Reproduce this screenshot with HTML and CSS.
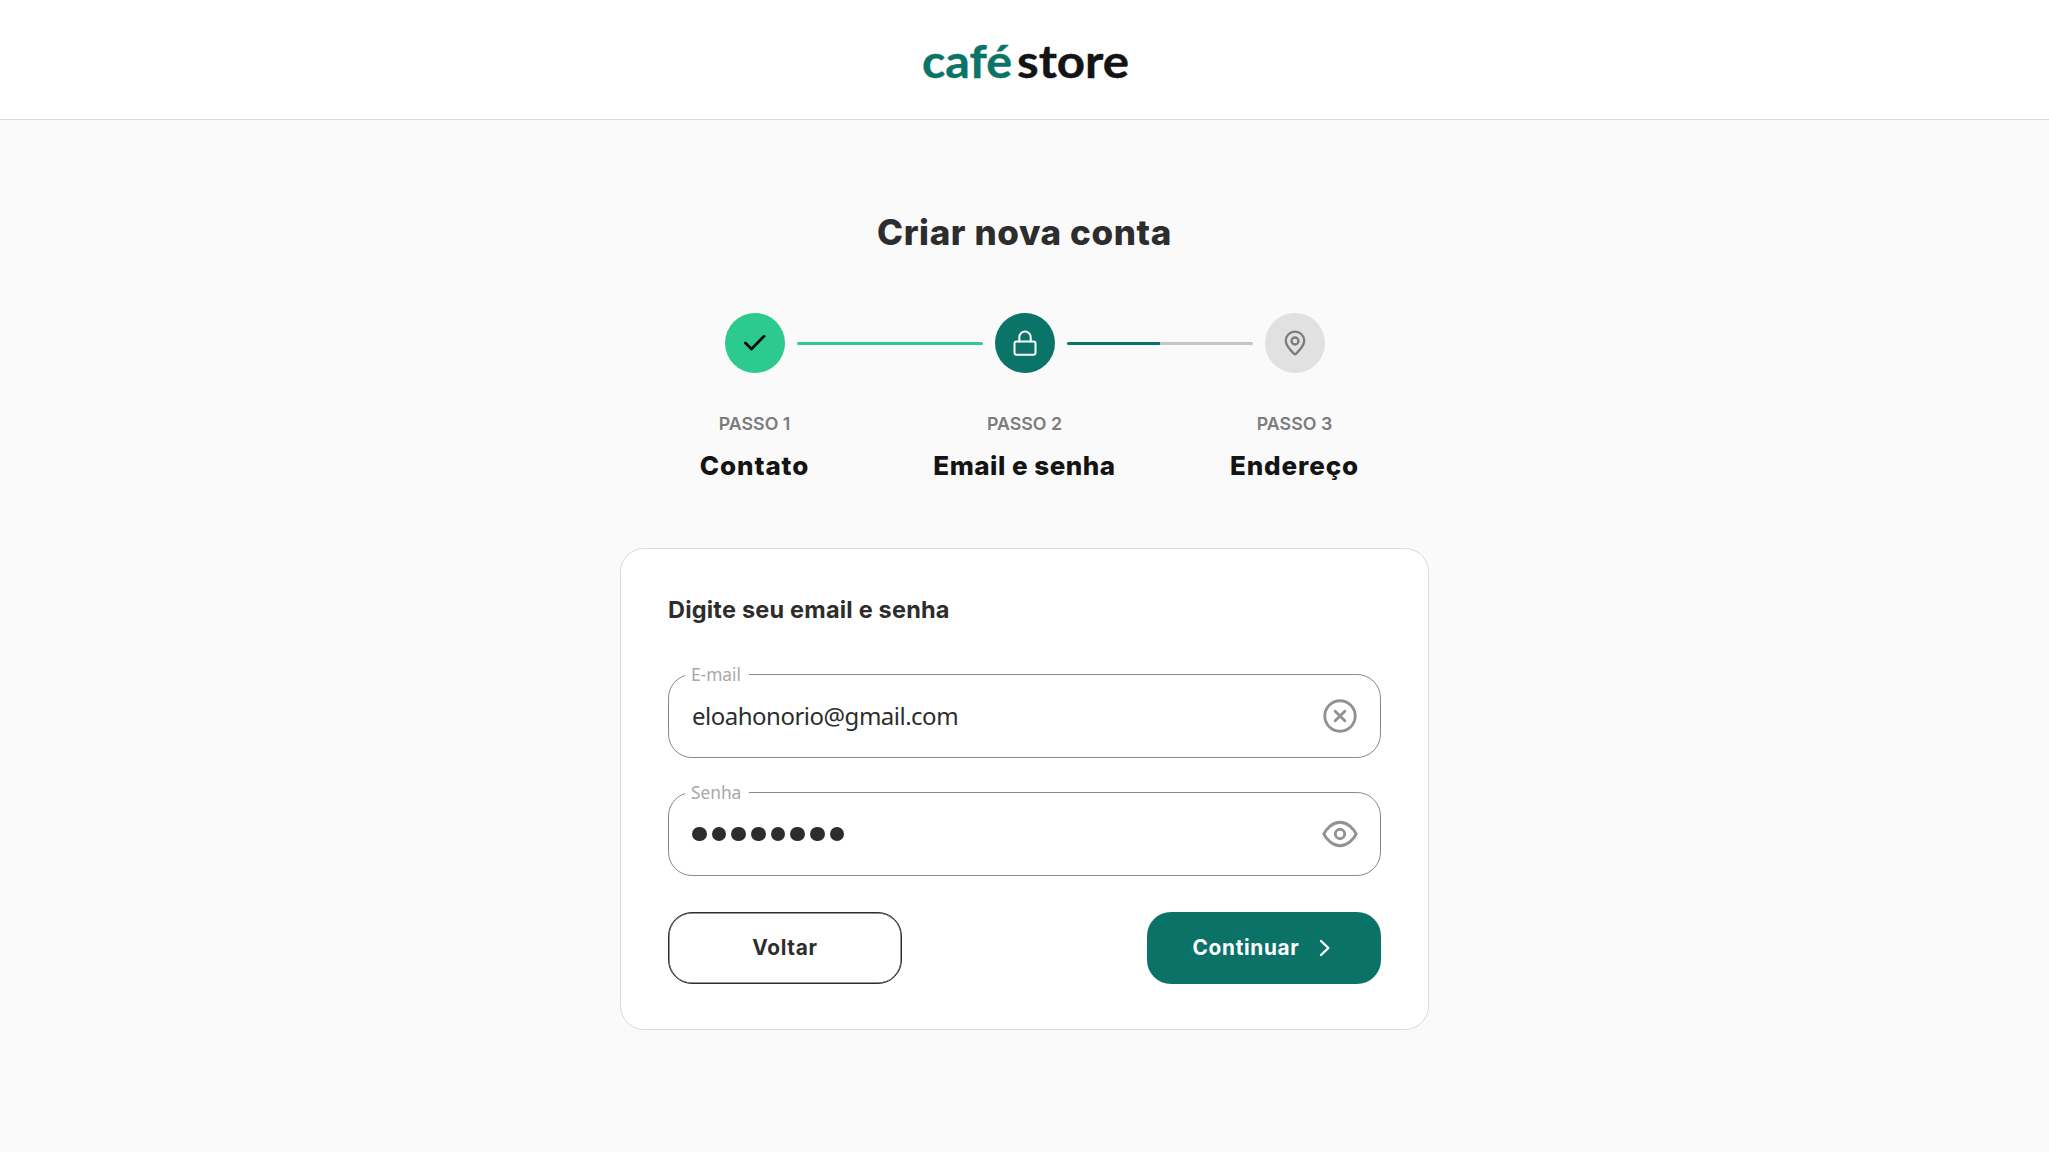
FILE: index.html
```html
<!DOCTYPE html>
<html lang="pt-BR">
<head>
<meta charset="utf-8">
<title>Criar nova conta – café store</title>
<link rel="stylesheet" href="styles.css">
</head>
<body>
<header class="header">
  <svg class="logo" width="208" height="60" viewBox="0 0 208 60" role="img" aria-label="café store">
    <text class="logo-cafe" x="1" y="49.500" textLength="90" lengthAdjust="spacingAndGlyphs">café</text>
    <text class="logo-store" x="96" y="49.500" textLength="112" lengthAdjust="spacingAndGlyphs">store</text>
  </svg>
</header>
<main class="page">
  <h1 class="title">Criar nova conta</h1>
  <ol class="steps">
    <li class="step">
      <span class="badge badge-done"><svg width="24" height="24" viewBox="0 0 24 24"><path d="M2.500 12 8.500 18 21 5.200" stroke-width="2.900"/></svg></span>
      <span class="step-number">PASSO 1</span>
      <span class="step-name step-name-wide">Contato</span>
    </li>
    <li class="connector connector-done"></li>
    <li class="step">
      <span class="badge badge-current"><svg width="24" height="26" viewBox="0 0 24 26"><rect x="1.500" y="11.500" width="21" height="13.200" rx="2"/><path d="M6.300 11.500V7.300a5.700 5.700 0 0 1 11.400 0v4.200"/></svg></span>
      <span class="step-number">PASSO 2</span>
      <span class="step-name">Email e senha</span>
    </li>
    <li class="connector connector-half"></li>
    <li class="step">
      <span class="badge badge-next"><svg width="22" height="26" viewBox="0 0 22 26"><path d="M20.200 10.800c0 5.200-5.300 10.200-8.300 13a1.300 1.300 0 0 1-1.800 0C7.100 21 1.800 16 1.800 10.800a9.200 9.200 0 0 1 18.400 0Z"/><circle cx="11" cy="11" r="3.500"/></svg></span>
      <span class="step-number">PASSO 3</span>
      <span class="step-name step-name-wide">Endereço</span>
    </li>
  </ol>
  <form class="card">
    <h2 class="card-title">Digite seu email e senha</h2>
    <div class="field">
      <label class="field-label">E-mail</label>
      <span class="field-value">eloahonorio@gmail.com</span>
      <svg class="field-icon" width="36" height="36" viewBox="0 0 36 36"><circle cx="18" cy="18" r="15.200"/><path d="m13.200 13.200 9.600 9.600m0-9.600-9.600 9.600"/></svg>
    </div>
    <div class="field field-password">
      <label class="field-label">Senha</label>
      <span class="dots"><i></i><i></i><i></i><i></i><i></i><i></i><i></i><i></i></span>
      <svg class="field-icon" width="36" height="36" viewBox="0 0 36 36"><path d="M1.800 18C4.500 12.600 10.500 6.200 18 6.200S31.500 12.600 34.200 18C31.500 23.400 25.500 29.800 18 29.800S4.500 23.400 1.800 18Z"/><circle cx="18" cy="18" r="4.700"/></svg>
    </div>
    <div class="actions">
      <button class="button button-back" type="button">Voltar</button>
      <button class="button button-next" type="button"><span>Continuar</span><svg width="12" height="18" viewBox="0 0 12 18"><path d="m2 2 7.400 7L2 16"/></svg></button>
    </div>
  </form>
</main>
</body>
</html>
```
FILE: styles.css
```css
* { box-sizing: border-box; }
body {
  margin: 0;
  min-height: 100vh;
  background: #fafafa;
  color: #2d2d2d;
  font-family: Inter, Roboto, sans-serif;
}
svg { display: block; fill: none; stroke: currentColor; stroke-linecap: round; stroke-linejoin: round; }
.header {
  height: 120px;
  padding-top: 28px;
  display: flex;
  justify-content: center;
  align-items: flex-start;
  background: #fff;
  border-bottom: 1px solid #d9dbdb;
}
.logo { overflow: visible; font-family: Lato, sans-serif; font-size: 46px; font-weight: 700; }
.logo text { stroke-width: .4px; }
.logo-cafe { fill: #0b7467; stroke: #0b7467; }
.logo-store { fill: #141414; stroke: #141414; }
.page { width: 809px; margin: 0 auto; padding-top: 88px; }
.title { margin: 0; height: 48px; line-height: 48px; font-size: 35px; font-weight: 800; text-align: center; letter-spacing: .6px; }
.steps { list-style: none; margin: 57px 0 0; padding: 0 104.500px; display: flex; height: 235px; }
.step { width: 60px; flex: none; display: flex; flex-direction: column; align-items: center; white-space: nowrap; }
.badge { width: 60px; height: 60px; border-radius: 50%; display: flex; align-items: center; justify-content: center; }
.badge svg { stroke-width: 2; }
.badge-done { background: #2cca8e; color: #111; }
.badge-current { background: #0a7468; color: #fff; }
.badge-next { background: #e1e1e1; color: #7b7b7b; }
.badge-next svg { stroke-width: 2.300; }
.step-number { margin-top: 39px; height: 24px; line-height: 24px; font-size: 17.800px; font-weight: 600; color: #7c7c7c; }
.step-name { margin-top: 12px; height: 36px; line-height: 36px; font-size: 26px; font-weight: 800; color: #141414; letter-spacing: .500px; }
.step-name-wide { letter-spacing: .900px; }
.connector { flex: 1; height: 3px; margin: 29px 12px 0; border-radius: 2px; }
.connector-done { background: #35c791; }
.connector-half { background: linear-gradient(to right, #0a7468 50%, #c4c4c4 50%); }
.card { height: 482px; padding: 45px 47px; border: 1px solid #dadada; border-radius: 24px; background: #fff; }
.card-title { margin: 0; height: 32px; line-height: 32px; font-size: 23.500px; font-weight: 700; letter-spacing: .200px; }
.field { position: relative; display: flex; align-items: center; justify-content: space-between; height: 84px; margin-top: 48px; padding: 0 22px 0 23px; border: 1px solid #8a8a8a; border-radius: 24px; font-family: "Noto Sans", "Open Sans", sans-serif; }
.field-password { margin-top: 34px; }
.field-label { position: absolute; left: 16px; top: -12px; width: 64px; height: 24px; line-height: 24px; padding-left: 6px; background: #fff; font-size: 17.300px; color: #a8a8a8; white-space: nowrap; }
.field-value { font-size: 24px; line-height: 32px; color: #2d2d2d; letter-spacing: -.500px; }
.field-icon { color: #929292; stroke-width: 2.900; }
.dots { display: flex; gap: 5.200px; }
.dots i { width: 14.500px; height: 14.500px; border-radius: 50%; background: #2d2d2d; }
.actions { display: flex; justify-content: space-between; margin-top: 36px; }
.button { width: 234px; height: 72px; padding: 0; border-radius: 24px; display: flex; align-items: center; justify-content: center; font: 700 20.800px/28px Inter, Roboto, sans-serif; letter-spacing: .700px; }
.button-back { border: 1px solid #2d2d2d; box-shadow: inset 0 0 0 .500px #2d2d2d; background: #fff; color: #2d2d2d; }
.button-next { border: 0; padding-right: 5px; background: #0a7267; color: #fff; gap: 19px; }
.button-next svg { stroke-width: 2.400; }
```
